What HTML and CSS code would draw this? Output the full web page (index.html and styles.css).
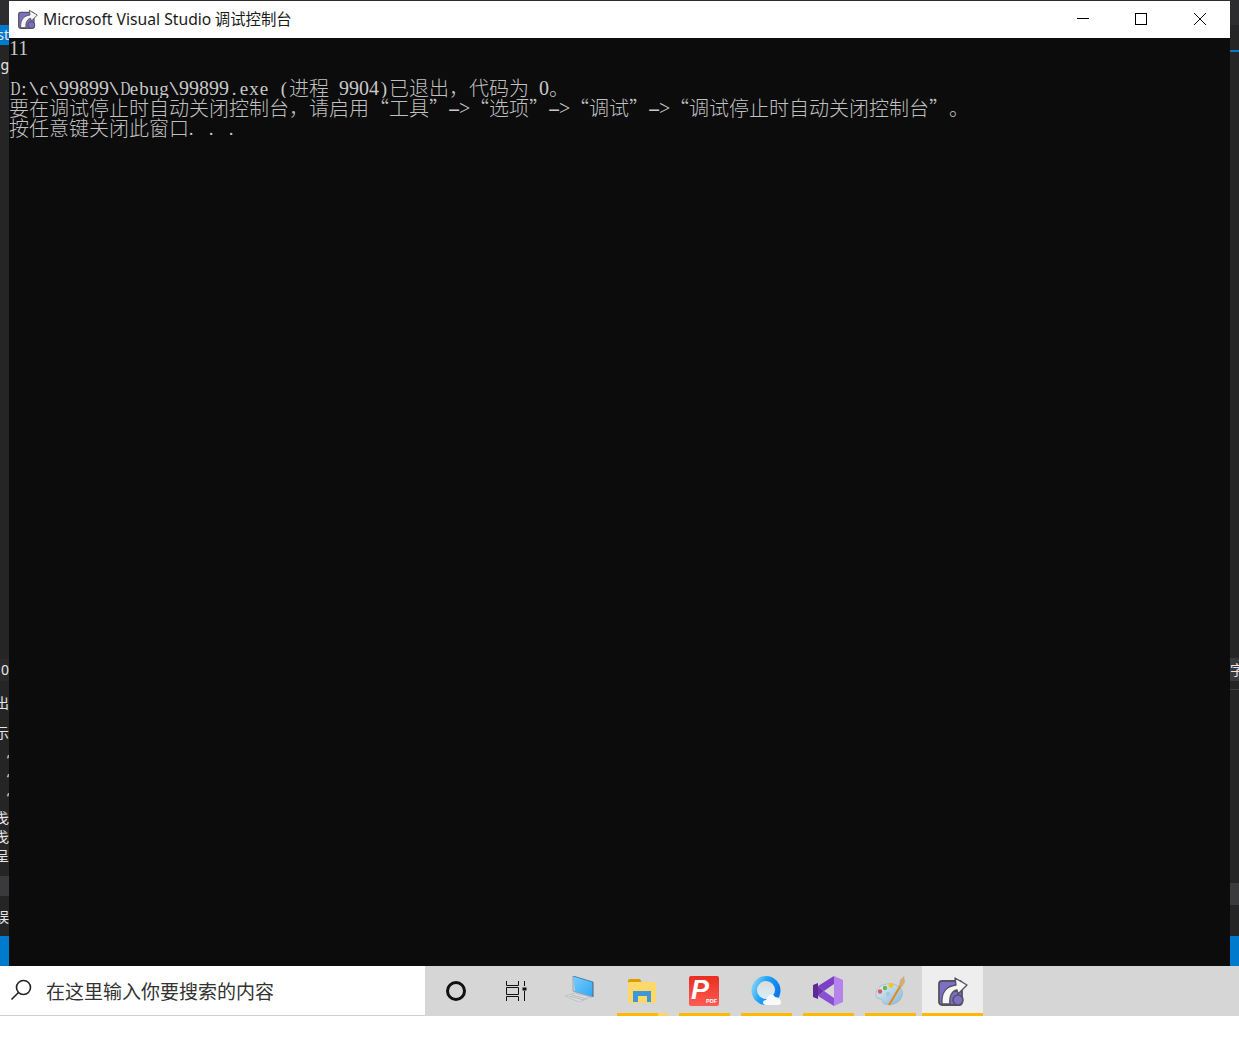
FILE: index.html
```html
<!DOCTYPE html>
<html lang="zh-CN">
<head>
<meta charset="utf-8">
<title>Microsoft Visual Studio 调试控制台</title>
<link rel="stylesheet" href="styles.css">
</head>
<body>
<svg class="defs" width="0" height="0" aria-hidden="true">
  <defs>
    <symbol id="app" viewBox="0 0 30 30">
      <rect x="1" y="5" width="23" height="24" rx="3" fill="#7c6fc4" stroke="#55535f" stroke-width="1.8"/>
      <path d="M4 28 C3 16 9 10 18 9 L17 2 L29 9 L20 18 L19 14 C14 15 11 20 12 28 Z" fill="#f6f6f6" stroke="#55535f" stroke-width="1.4" stroke-linejoin="round"/>
      <circle cx="20" cy="24" r="5" fill="#7c6fc4" stroke="#55535f" stroke-width="1.6"/>
    </symbol>
  </defs>
</svg>
<div class="stage">
  <div class="upper">
    <aside class="strip strip-left">
      <div class="band dark h25"></div>
      <div class="band blue h20 glyph"><span>st</span></div>
      <div class="band panel h10"></div>
      <div class="band panel h20 glyph"><span>g</span></div>
      <div class="band panel h584"></div>
      <div class="band darker h22 glyph"><span>0</span></div>
      <div class="band panel h12"></div>
      <div class="band panel h20 glyph"><span>出</span></div>
      <div class="band panel h10"></div>
      <div class="band panel h20 glyph"><span>示</span></div>
      <div class="band panel h7"></div>
      <div class="band panel h19 glyph small"><span>‘</span></div>
      <div class="band panel h19 glyph small"><span>‘</span></div>
      <div class="band panel h19 glyph small"><span>‘</span></div>
      <div class="band panel h1"></div>
      <div class="band panel h19 glyph"><span>戋</span></div>
      <div class="band panel h19 glyph"><span>戋</span></div>
      <div class="band panel h19 glyph"><span>呈</span></div>
      <div class="band panel h11"></div>
      <div class="band lift h20"></div>
      <div class="band panel h11"></div>
      <div class="band panel h20 glyph"><span>误</span></div>
      <div class="band panel fill"></div>
      <div class="band blue h30"></div>
    </aside>
    <main class="console">
      <header class="titlebar">
        <svg class="title-icon"><use href="#app"/></svg>
        <span class="title-text"><span class="title-latin">Microsoft Visual Studio</span> 调试控制台</span>
        <div class="win-controls">
          <button class="win-btn" aria-label="最小化"><svg width="12" height="12" viewBox="0 0 12 12"><path d="M0 5.500H12" stroke="#000" fill="none"/></svg></button>
          <button class="win-btn" aria-label="最大化"><svg width="12" height="12" viewBox="0 0 12 12"><rect x=".5" y=".5" width="11" height="11" stroke="#000" fill="none"/></svg></button>
          <button class="win-btn" aria-label="关闭"><svg width="12" height="12" viewBox="0 0 12 12"><path d="M0 0L12 12M12 0L0 12" stroke="#111" fill="none"/></svg></button>
        </div>
      </header>
      <div class="output">
        <div class="line"><span class="d">11</span></div>
        <div class="line"></div>
        <div class="line"><span class="c w">D</span><span class="c">:</span><span class="c s">\</span><span class="c">c</span><span class="c s">\</span><span class="d">99899</span><span class="c s">\</span><span class="c w">D</span><span class="c">e</span><span class="c">b</span><span class="c">u</span><span class="c">g</span><span class="c s">\</span><span class="d">99899</span><span class="c">.</span><span class="c">e</span><span class="c">x</span><span class="c">e</span><span class="c"> </span><span class="c">(</span><span class="z">进程</span><span class="c"> </span><span class="d">9904</span><span class="c">)</span><span class="z">已退出，代码为</span><span class="c"> </span><span class="d">0</span><span class="z">。</span></div>
        <div class="line"><span class="z">要在调试停止时自动关闭控制台，请启用“工具”</span><span class="c dash">-</span><span class="c gt">&gt;</span><span class="z">“选项”</span><span class="c dash">-</span><span class="c gt">&gt;</span><span class="z">“调试”</span><span class="c dash">-</span><span class="c gt">&gt;</span><span class="z">“调试停止时自动关闭控制台”。</span></div>
        <div class="line"><span class="z">按任意键关闭此窗口</span><span class="dots"><span class="c">.</span><span class="c"> </span><span class="c">.</span><span class="c"> </span><span class="c">.</span></span></div>
      </div>
    </main>
    <aside class="strip strip-right">
      <div class="band dark h25"></div>
      <div class="band panel h25"></div>
      <div class="band blue h2"></div>
      <div class="band panel h606"></div>
      <div class="band lift h23 glyph left"><span>字</span></div>
      <div class="band panel h8"></div>
      <div class="band rule h1"></div>
      <div class="band panel h193"></div>
      <div class="band lift h22"></div>
      <div class="band panel fill"></div>
      <div class="band blue h30"></div>
    </aside>
  </div>
  <footer class="taskbar">
    <div class="search">
      <svg class="search-icon" width="24" height="24" viewBox="0 0 24 24"><circle cx="13.5" cy="9.5" r="7" fill="none" stroke="#222" stroke-width="1.6"/><path d="M8.5 14.5L1.500 21.500" stroke="#222" stroke-width="1.6"/></svg>
      <span class="search-text">在这里输入你要搜索的内容</span>
    </div>
    <div class="task w62"><svg width="22" height="22" viewBox="0 0 22 22"><circle cx="11" cy="11" r="8.5" fill="none" stroke="#111" stroke-width="3"/></svg></div>
    <div class="task w60"><svg class="nudge" width="22" height="20" viewBox="0 0 22 20"><path d="M1.500 0V4.500H13.500V0M1.500 20V15.500H13.500V20M1.500 6.500H13.500V13.500H1.500ZM19.500 0V5M19.500 10V20" fill="none" stroke="#111"/><rect x="17.5" y="6.5" width="4" height="3" fill="#111"/></svg></div>
    <div class="task w64"><svg class="shift" width="30" height="26" viewBox="0 0 30 26"><defs><linearGradient id="mon" x1="0" y1="0" x2="1" y2="1"><stop offset="0" stop-color="#79cdff"/><stop offset="1" stop-color="#2fa6f5"/></linearGradient></defs><path d="M8 0L28 6V21L10 16Z" fill="url(#mon)"/><path d="M8 0V15L27 21" fill="none" stroke="#8fa5b4" stroke-width="1"/><path d="M28 6V21" stroke="#56606a" stroke-width="1"/><path d="M8 0L28 6" stroke="#3a6f96" stroke-width=".8"/><path d="M0 20L10 17L25 21L14 26Z" fill="#d9dcdf" stroke="#b5b9bd" stroke-width=".7"/><path d="M4 20L19 24M7 19L22 23" stroke="#aeb2b6" stroke-width=".7"/></svg></div>
    <div class="task app running explorer"><svg width="28" height="24" viewBox="0 0 28 24"><path d="M0 2A2 2 0 0 1 2 0H12L14 4H0Z" fill="#dc9d00"/><rect y="3" width="28" height="21" rx="1.5" fill="#ffd86a"/><path d="M5 12H23V23H19V17H10V23H5Z" fill="#3e97d6"/></svg></div>
    <div class="task app running"><svg width="30" height="30" viewBox="0 0 30 30"><defs><linearGradient id="pdf" x1="0" y1="0" x2="0" y2="1"><stop offset="0" stop-color="#e92c1f"/><stop offset="1" stop-color="#ff5c55"/></linearGradient></defs><rect width="30" height="30" rx="2" fill="url(#pdf)"/><text class="pdf-p" x="2" y="23">P</text><text class="pdf-t" x="17" y="27">PDF</text></svg></div>
    <div class="task app running"><svg width="30" height="30" viewBox="0 0 30 30"><defs><linearGradient id="qb" x1="0" y1="0" x2="1" y2=".4"><stop offset="0" stop-color="#9fe2f5"/><stop offset=".5" stop-color="#22a4f5"/><stop offset="1" stop-color="#0a78ee"/></linearGradient><linearGradient id="qi" x1="0" y1="0" x2="0" y2="1"><stop offset="0" stop-color="#dcdcdc"/><stop offset="1" stop-color="#d8eef9"/></linearGradient></defs><circle cx="15" cy="14.5" r="14.5" fill="url(#qb)"/><circle cx="15" cy="14" r="9" fill="url(#qi)"/><path d="M15 29C11 29 11 24 15 24C16 19 22 17 24 21C28 21 30 24 30 26C30 29 28 29 26 29Z" fill="#f7f9fb"/></svg></div>
    <div class="task app running"><svg width="30" height="30" viewBox="0 0 30 30"><path d="M21 0L30 4V26L21 30Z" fill="#b583ec"/><path d="M21 0V8L11 15L5 10Z" fill="#7c3fc6"/><path d="M21 30V22L11 15L5 20Z" fill="#8a4fd4"/><path d="M0 9L5 7V23L0 21Z" fill="#5d2a96"/><path d="M5 10L11 15L5 20Z" fill="#6d35ad"/></svg></div>
    <div class="task app running"><svg width="30" height="30" viewBox="0 0 30 30"><defs><linearGradient id="pal" x1="0" y1="0" x2="1" y2="1"><stop offset="0" stop-color="#e4f0f7"/><stop offset="1" stop-color="#86b8da"/></linearGradient></defs><path d="M1 18C1 11 9 7 17 8C25 9 29 14 27 20C25 27 17 30 10 28C6 27 9 24 6 23C3 22 1 23 1 18Z" fill="url(#pal)" stroke="#8fadc0" stroke-width=".6"/><circle cx="5" cy="15.500" r="2.200" fill="#e2574c"/><circle cx="10" cy="12" r="2.200" fill="#6bb84a"/><circle cx="16" cy="9.500" r="2.400" fill="#f5c518"/><circle cx="13" cy="18" r="2.200" fill="#a9c6d8"/><path d="M14 29L26 9" stroke="#e58a1f" stroke-width="2.200"/><path d="M24 10L25 4L29 0L30 6L27 11Z" fill="#cfae7c"/></svg></div>
    <div class="task active"><svg class="active-icon"><use href="#app"/></svg></div>
  </footer>
</div>
</body>
</html>
```
FILE: styles.css
```css
* { box-sizing: border-box; }
html, body { margin: 0; padding: 0; background: #fff; }
.defs { position: absolute; }
.stage { width: 1239px; height: 1047px; overflow: hidden; }
.upper { display: flex; height: 966px; background: #2d2d30; }

/* Strips of the window behind */
.strip { width: 9px; height: 966px; display: flex; flex-direction: column; overflow: hidden; background: #252526; flex: none; }
.band { flex: none; overflow: hidden; }
.dark { background: #2d2d30; }
.darker { background: #2a2a2c; }
.panel { background: #252526; }
.lift { background: #3a3a3d; }
.rule { background: #3f3f42; }
.blue { background: #007acc; }
.fill { flex: 1; }
.h1 { height: 1px; } .h2 { height: 2px; } .h7 { height: 7px; } .h8 { height: 8px; }
.h10 { height: 10px; } .h11 { height: 11px; } .h12 { height: 12px; }
.h19 { height: 19px; } .h20 { height: 20px; } .h22 { height: 22px; } .h23 { height: 23px; }
.h25 { height: 25px; } .h30 { height: 30px; } .h193 { height: 193px; }
.h584 { height: 584px; } .h606 { height: 606px; }
.glyph { display: flex; justify-content: flex-end; align-items: center; color: #e6e6e6; font: 14px/20px "Noto Sans", "Noto Sans CJK SC", sans-serif; white-space: nowrap; }
.glyph.left { justify-content: flex-start; }
.glyph.small { font-size: 12px; }

/* Console window */
.console { width: 1221px; height: 965px; margin-top: 1px; display: flex; flex-direction: column; background: #0c0c0c; flex: none; }
.titlebar { height: 37px; background: #fff; display: flex; align-items: center; flex: none; padding-bottom: 1px; }
.title-icon { width: 20px; height: 20px; margin-left: 9px; flex: none; }
.title-text { margin-left: 5px; margin-top: -2px; font: 15.4px/20px "Noto Sans CJK SC", sans-serif; color: #1a1a1a; white-space: nowrap; }
.title-latin { font: 15.7px/20px "Noto Sans", sans-serif; }
.win-controls { display: flex; margin-left: auto; margin-right: 1px; height: 36px; }
.win-btn { width: 58.5px; height: 36px; padding: 0; border: 0; background: none; display: flex; align-items: center; justify-content: center; }
.output { color: #c8c8c8; text-spacing-trim: space-all; }
.line { height: 20px; white-space: pre; overflow: hidden; font: 300 20px/20px "Noto Sans CJK SC", sans-serif; }
.d { font: 20px/20px "Liberation Serif", serif; vertical-align: 1px; }
.c { display: inline-block; width: 10px; height: 20px; text-align: center; font: 19px/20px "Liberation Serif", serif; vertical-align: 1px; }
.w { transform: scaleX(.72); }
.s { transform: scaleX(1.7); }
.gt { font-size: 20px; }
.dash { font-size: 20px; transform: scaleX(1.9); }
.dots { margin-left: -3px; }
.z { color: #c0c0c0; }

/* Taskbar */
.taskbar { display: flex; height: 50px; background: #d6d6d6; }
.search { width: 425px; height: 50px; background: #fff; border-bottom: 1px solid #cfcfcf; display: flex; align-items: center; flex: none; }
.search-icon { margin-left: 10px; margin-top: -1px; flex: none; }
.search-text { margin-left: 12px; font: 19px/24px "Noto Sans CJK SC", sans-serif; color: #333; white-space: nowrap; }
.task { height: 50px; display: flex; align-items: center; justify-content: center; flex: none; }
.w62 { width: 62px; } .w60 { width: 60px; } .w64 { width: 64px; }
.nudge { margin-right: 2px; }
.shift { margin-left: 2px; margin-bottom: 4px; }
.app { width: 62px; position: relative; }
.running::after { content: ""; position: absolute; left: 6px; right: 5px; bottom: 0; height: 3px; background: #ffb900; }
.explorer::after { background: linear-gradient(to right, #ffb900 41px, #ffd466 41px); }
.active { width: 61px; margin-left: 1px; background: #eeeeee; border-bottom: 3px solid #ffb900; }
.active-icon { width: 30px; height: 30px; margin-top: 3px; }
.pdf-p { font: italic bold 27px "Liberation Sans", sans-serif; fill: #fff; }
.pdf-t { font: bold 5.5px "Liberation Sans", sans-serif; fill: #fff; }
```
